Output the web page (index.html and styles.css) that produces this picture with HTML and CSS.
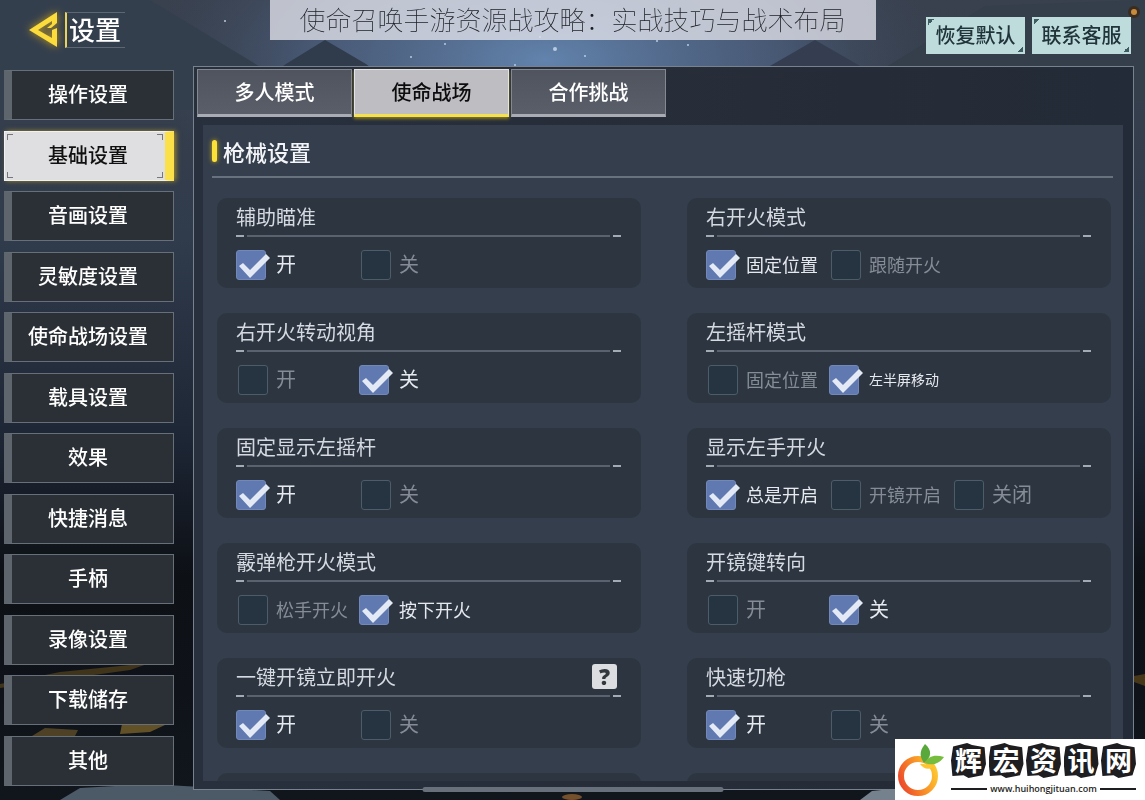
FILE: index.html
```html
<!DOCTYPE html>
<html lang="zh-CN">
<head>
<meta charset="utf-8">
<meta name="viewport" content="width=device-width, initial-scale=1">
<title>设置</title>
<link rel="stylesheet" href="styles.css">
</head>

<body>

<!-- night sky, hills and lights behind everything -->
<svg class="scene" viewBox="0 0 1145 800" preserveAspectRatio="none" aria-hidden="true">
	<defs>
		<linearGradient id="sky" x1="0" y1="0" x2="0" y2="1">
			<stop offset="0" stop-color="#39414f"/>
			<stop offset="0.3" stop-color="#303b4b"/>
			<stop offset="0.55" stop-color="#1d2635"/>
			<stop offset="0.72" stop-color="#0d1015"/>
			<stop offset="1" stop-color="#11161d"/>
		</linearGradient>
		<radialGradient id="glow">
			<stop offset="0" stop-color="#6283ad"/>
			<stop offset="0.6" stop-color="#4b5d7b" stop-opacity="0.8"/>
			<stop offset="1" stop-color="#3d4757" stop-opacity="0"/>
		</radialGradient>
	</defs>
	<rect width="1145" height="800" fill="url(#sky)"/>
	<ellipse cx="545" cy="60" rx="400" ry="180" fill="url(#glow)"/>
	<path d="M0 0H150L262 68L330 110H0Z" fill="#343f4e"/>
	<path d="M286 64L325 40L366 64L400 90H250Z" fill="#303b4c"/>
	<path d="M770 66L815 40L860 66L880 90H740Z" fill="#343e50"/>
	<path d="M888 66L985 6L1145 0V100H840Z" fill="#353e4b"/>
	<g fill="#b9cbe2">
		<circle cx="411" cy="57" r="1"/>
		<circle cx="445" cy="44" r="1"/>
		<circle cx="515" cy="65" r="1"/>
		<circle cx="540" cy="37" r="1"/>
		<circle cx="555" cy="49" r="2"/>
		<circle cx="585" cy="56" r="1"/>
		<circle cx="657" cy="41" r="1"/>
		<circle cx="688" cy="45" r="1"/>
		<circle cx="225" cy="21" r="1"/>
	</g>
	<circle cx="1134" cy="12" r="6" fill="#3a2c20"/>
	<circle cx="1134" cy="12" r="3" fill="#c78b3c"/>
	<path d="M0 684L60 672L150 663L130 670L0 688Z" fill="#40351b"/>
	<path d="M32 736L45 728L78 730L75 736Z" fill="#4f4126"/>
	<path d="M120 734L122 724L165 725L150 732Z" fill="#625127"/>
	<path d="M1134 676L1145 674V686L1134 682Z" fill="#463719"/>
	<path d="M60 800L80 788L150 784L270 791L280 800Z" fill="#4c5967"/>
	<path d="M860 800L872 791L900 788V800Z" fill="#75818d"/>
	<ellipse cx="572" cy="797" rx="10" ry="3" fill="#75502c"/>
</svg>

<div class="app">
	<header class="topbar">
		<button class="back" type="button" aria-label="返回">
			<svg width="34" height="42" viewBox="0 0 34 42" aria-hidden="true">
				<path d="M31 4L3 22L31 39V20L26 22V30L12 22L26 13V16L21 20H25L31 15Z" fill="#fbdc3c"/>
			</svg>
		</button>
		<h1 class="page-title">设置</h1>
		<div class="actions">
			<button class="action" type="button">恢复默认</button>
			<button class="action" type="button">联系客服</button>
		</div>
	</header>

	<div class="main">
		<nav class="sidebar">
			<button class="side-item" type="button">操作设置</button>
			<button class="side-item active" type="button">基础设置</button>
			<button class="side-item" type="button">音画设置</button>
			<button class="side-item" type="button">灵敏度设置</button>
			<button class="side-item" type="button">使命战场设置</button>
			<button class="side-item" type="button">载具设置</button>
			<button class="side-item" type="button">效果</button>
			<button class="side-item" type="button">快捷消息</button>
			<button class="side-item" type="button">手柄</button>
			<button class="side-item" type="button">录像设置</button>
			<button class="side-item" type="button">下载储存</button>
			<button class="side-item" type="button">其他</button>
		</nav>

		<main class="panel">
			<div class="tabs">
				<button class="tab" type="button">多人模式</button>
				<button class="tab active" type="button">使命战场</button>
				<button class="tab" type="button">合作挑战</button>
			</div>

			<section class="content">
				<h2 class="section-title">枪械设置</h2>
				<div class="cards">
					<fieldset class="card">
						<legend class="card-title">辅助瞄准</legend>
						<div class="options">
							<label class="option"><input type="checkbox" checked><span>开</span></label>
							<label class="option"><input type="checkbox"><span>关</span></label>
						</div>
					</fieldset>
					<fieldset class="card">
						<legend class="card-title">右开火模式</legend>
						<div class="options">
							<label class="option long"><input type="checkbox" checked><span>固定位置</span></label>
							<label class="option long"><input type="checkbox"><span>跟随开火</span></label>
						</div>
					</fieldset>
					<fieldset class="card">
						<legend class="card-title">右开火转动视角</legend>
						<div class="options">
							<label class="option"><input type="checkbox"><span>开</span></label>
							<label class="option"><input type="checkbox" checked><span>关</span></label>
						</div>
					</fieldset>
					<fieldset class="card">
						<legend class="card-title">左摇杆模式</legend>
						<div class="options">
							<label class="option long"><input type="checkbox"><span>固定位置</span></label>
							<label class="option small"><input type="checkbox" checked><span>左半屏移动</span></label>
						</div>
					</fieldset>
					<fieldset class="card">
						<legend class="card-title">固定显示左摇杆</legend>
						<div class="options">
							<label class="option"><input type="checkbox" checked><span>开</span></label>
							<label class="option"><input type="checkbox"><span>关</span></label>
						</div>
					</fieldset>
					<fieldset class="card">
						<legend class="card-title">显示左手开火</legend>
						<div class="options">
							<label class="option long"><input type="checkbox" checked><span>总是开启</span></label>
							<label class="option long"><input type="checkbox"><span>开镜开启</span></label>
							<label class="option"><input type="checkbox"><span>关闭</span></label>
						</div>
					</fieldset>
					<fieldset class="card">
						<legend class="card-title">霰弹枪开火模式</legend>
						<div class="options">
							<label class="option long"><input type="checkbox"><span>松手开火</span></label>
							<label class="option long"><input type="checkbox" checked><span>按下开火</span></label>
						</div>
					</fieldset>
					<fieldset class="card">
						<legend class="card-title">开镜键转向</legend>
						<div class="options">
							<label class="option"><input type="checkbox"><span>开</span></label>
							<label class="option"><input type="checkbox" checked><span>关</span></label>
						</div>
					</fieldset>
					<fieldset class="card">
						<legend class="card-title">一键开镜立即开火 <button class="help" type="button">?</button></legend>
						<div class="options">
							<label class="option"><input type="checkbox" checked><span>开</span></label>
							<label class="option"><input type="checkbox"><span>关</span></label>
						</div>
					</fieldset>
					<fieldset class="card">
						<legend class="card-title">快速切枪</legend>
						<div class="options">
							<label class="option"><input type="checkbox" checked><span>开</span></label>
							<label class="option"><input type="checkbox"><span>关</span></label>
						</div>
					</fieldset>
					<div class="card"></div>
					<div class="card"></div>
				</div>
			</section>
		</main>
	</div>
</div>

<div class="home-bar"></div>

<div class="banner">使命召唤手游资源战攻略：实战技巧与战术布局</div>

<!-- site logo in the corner -->
<div class="brand">
	<svg class="brand-icon" width="48" height="54" viewBox="0 0 48 54" aria-hidden="true">
		<defs>
			<linearGradient id="orange" x1="0" y1="0.7" x2="1" y2="0.3">
				<stop offset="0" stop-color="#ed4d2c"/>
				<stop offset="0.5" stop-color="#f88c27"/>
				<stop offset="1" stop-color="#fdc52f"/>
			</linearGradient>
		</defs>
		<circle cx="22" cy="33" r="17" fill="none" stroke="url(#orange)" stroke-width="6"/>
		<path d="M24 21C29 20 32 24 39 20L36 25C31 27 27 25 24 21Z" fill="#fdc52f"/>
		<path d="M28 20C22 12 25 6 29 1C36 7 36 14 28 20Z" fill="#58a83c"/>
		<path d="M29 20C32 13 39 11 48 14C43 21 36 23 29 20Z" fill="#76bd3d"/>
	</svg>
	<div class="brand-text">
		<div class="brand-name">
			<span>辉</span><span>宏</span><span>资</span><span>讯</span><span>网</span>
		</div>
		<div class="brand-url">www.huihongjituan.com</div>
	</div>
</div>

</body>
</html>
```
FILE: styles.css
```css
* {
	box-sizing: border-box;
}
body {
	margin: 0;
	background-color: #1d2635;
	color: #e8ebf0;
	font-family: "Noto Sans CJK SC", sans-serif;
	font-size: 20px;
	line-height: 30px;
	overflow: hidden;
}
button {
	margin: 0;
	padding: 0;
	border: none;
	font-family: inherit;
	font-size: 20px;
	font-weight: 500;
	line-height: 30px;
	cursor: pointer;
}
.scene {
	position: fixed;
	top: 0;
	left: 0;
	width: 100%;
	height: 100%;
}
.app {
	position: relative;
	display: flex;
	flex-direction: column;
	height: 100vh;
	padding: 0 11px 10px 4px;
}

/* top bar */
.topbar {
	display: flex;
	align-items: flex-start;
	flex: none;
	height: 66px;
	padding: 8px 3px 0 22px;
}
.back {
	width: 34px;
	height: 42px;
	background: none;
	filter: drop-shadow(0 0 4px #c9a01c);
}
.back svg {
	display: block;
}
.page-title {
	margin: 4px 0 0 5px;
	padding: 0 4px 2px 2px;
	border-left: 2px solid #e9d35c;
	border-top: 1px solid #5d6673;
	border-bottom: 1px solid #5d6673;
	font-size: 26px;
	font-weight: 500;
	line-height: 32px;
	color: #fff;
}
.actions {
	display: flex;
	gap: 7px;
	margin: 9px 0 0 auto;
}
.action {
	width: 99px;
	height: 37px;
	padding-bottom: 2px;
	color: #20343a;
	background:
		linear-gradient(135deg, #3f5c63 50%, transparent 50%) left 2px top 2px / 6px 6px no-repeat,
		linear-gradient(315deg, #3f5c63 50%, transparent 50%) right 2px bottom 2px / 6px 6px no-repeat,
		#bfdcdc;
}

.main {
	display: flex;
	flex: 1;
	min-height: 0;
	gap: 19px;
}

/* left menu */
.sidebar {
	display: flex;
	flex-direction: column;
	justify-content: space-between;
	flex: none;
	width: 170px;
	padding: 4px 0;
}
.side-item {
	height: 50px;
	border: 1px solid #67707a;
	border-left: 8px solid #5e656d;
	padding: 0 9px 2px 0;
	color: #fff;
	background-color: #2b3036;
}
.side-item.active {
	border: 1px solid #f1f1f3;
	border-right: 9px solid #fbe04a;
	padding: 0 0 2px 6px;
	color: #111;
	/* corner marks */
	background:
		linear-gradient(#777, #777) left 2px top 2px / 6px 1px no-repeat,
		linear-gradient(#777, #777) left 2px top 2px / 1px 6px no-repeat,
		linear-gradient(#777, #777) right 2px top 2px / 6px 1px no-repeat,
		linear-gradient(#777, #777) right 2px top 2px / 1px 6px no-repeat,
		linear-gradient(#777, #777) left 2px bottom 2px / 6px 1px no-repeat,
		linear-gradient(#777, #777) left 2px bottom 2px / 1px 6px no-repeat,
		linear-gradient(#777, #777) right 2px bottom 2px / 6px 1px no-repeat,
		linear-gradient(#777, #777) right 2px bottom 2px / 1px 6px no-repeat,
		#dfdfe1;
	box-shadow: 2px 0 5px rgba(222, 184, 30, 0.6);
}

/* right panel */
.panel {
	display: flex;
	flex-direction: column;
	flex: 1;
	min-width: 0;
	padding: 2px 10px 8px 9px;
	border: 1px solid #78828e;
	background: linear-gradient(90deg, #28303e, #262c37 70%, #232b38);
}
.tabs {
	display: flex;
	flex: none;
	gap: 2px;
	margin-left: -6px;
}
.tab {
	width: 155px;
	height: 48px;
	border: 1px solid #838891;
	border-bottom: 3px solid #a9acb2;
	color: #fff;
	background: linear-gradient(#50545e, #5a5e68);
}
.tab.active {
	border-color: #e4e4e6;
	border-bottom-color: #f3e053;
	color: #0c0c0e;
	background-color: #bebec2;
	background-image: none;
	box-shadow: 0 2px 3px #85781f;
}
.content {
	flex: 1;
	min-height: 0;
	margin-top: 8px;
	padding: 0 10px 0 9px;
	overflow: hidden;
	background-color: #343e4c;
}
.section-title {
	display: flex;
	align-items: center;
	gap: 6px;
	margin: 0;
	height: 53px;
	border-bottom: 2px solid #68727f;
	font-size: 22px;
	font-weight: 500;
	color: #f2f4f7;
}
.section-title::before {
	content: "";
	width: 5px;
	height: 22px;
	border-radius: 3px;
	background-color: #fbe238;
	box-shadow: 0 0 5px #c9a81d;
}
.cards {
	display: grid;
	grid-template-columns: 1fr 1fr;
	grid-auto-rows: 90px;
	gap: 25px 46px;
	padding: 20px 2px 0 5px;
}
.card {
	min-width: 0;
	margin: 0;
	padding: 0 20px 0 19px;
	border: none;
	border-radius: 10px;
	background-color: #2d3541;
}
/* floated so that the legend sits inside the card and not on its edge */
.card-title {
	float: left;
	display: flex;
	align-items: center;
	justify-content: space-between;
	width: 100%;
	height: 39px;
	padding: 0 0 2px;
	color: #d5d9e0;
	background:
		linear-gradient(#a3abb5, #a3abb5) left bottom / 8px 2px no-repeat,
		linear-gradient(#a3abb5, #a3abb5) right bottom / 8px 2px no-repeat,
		linear-gradient(90deg, transparent 11px, #59626e 11px, #59626e calc(100% - 11px), transparent calc(100% - 11px)) left bottom / 100% 2px no-repeat;
}
.help {
	width: 25px;
	height: 25px;
	margin-right: 4px;
	border-radius: 3px;
	color: #33383f;
	background-color: #dcdde0;
	font-family: "Open Sans", sans-serif;
	font-size: 22px;
	font-weight: 800;
	line-height: 25px;
}
.options {
	clear: both;
	display: flex;
	padding-top: 13px;
}
.option {
	display: flex;
	align-items: center;
	width: 123px;
	height: 30px;
	white-space: nowrap;
	color: #858c96;
}
.option.long {
	font-size: 18px;
}
.option.small {
	font-size: 14px;
}
.option span {
	padding-bottom: 2px;
}
.option:has(input:checked) {
	color: #e6e9ee;
}
.option input {
	appearance: none;
	flex: none;
	width: 30px;
	height: 30px;
	margin: 0 8px 0 2px;
	border: 1px solid #4c5c68;
	border-radius: 3px;
	background-color: #263441;
}
.option input:checked {
	margin: 0 10px 0 0;
	border-color: #7288b8;
	background-color: #6079b0;
}
/* the tick runs a little past the right side of the box */
.option input:checked::after {
	content: "";
	display: block;
	width: 34px;
	height: 28px;
	background-color: #e3eaf6;
	clip-path: polygon(2px 15px, 6px 12px, 13px 19px, 29px 3px, 33px 7px, 13px 27px);
}

/* things drawn over the page */
.home-bar {
	position: fixed;
	left: 50%;
	bottom: 8px;
	width: 301px;
	height: 5px;
	border-radius: 3px;
	background-color: #68707c;
	transform: translateX(-50%);
}
.banner {
	position: fixed;
	top: 0;
	left: 50%;
	height: 40px;
	padding: 0 30px;
	color: #1b1d22;
	background-color: rgba(223, 224, 232, 0.8);
	font-size: 26px;
	font-weight: 100;
	line-height: 38px;
	white-space: nowrap;
	transform: translateX(-50%);
}
.brand {
	position: fixed;
	right: 0;
	bottom: 0;
	display: flex;
	align-items: center;
	gap: 7px;
	width: 250px;
	height: 61px;
	padding: 0 9px 0 1px;
	background-color: #fff;
}
.brand-icon {
	flex: none;
}
.brand-text {
	flex: 1;
}
.brand-name {
	display: flex;
	justify-content: space-between;
}
.brand-name span {
	width: 35px;
	height: 35px;
	color: #fff;
	background-color: #1e1e20;
	clip-path: polygon(6% 10%, 46% 0, 60% 6%, 96% 12%, 100% 60%, 90% 92%, 50% 100%, 36% 92%, 4% 94%, 0 50%);
	font-size: 27px;
	font-weight: 700;
	line-height: 34px;
	text-align: center;
}
.brand-url {
	display: flex;
	align-items: center;
	gap: 3px;
	margin-top: 4px;
	color: #1e1e20;
	font-family: "Open Sans", sans-serif;
	font-size: 9px;
	font-weight: 600;
	line-height: 14px;
}
.brand-url::before,
.brand-url::after {
	content: "";
	flex: 1;
	height: 2px;
	background-color: #1e1e20;
}
```
